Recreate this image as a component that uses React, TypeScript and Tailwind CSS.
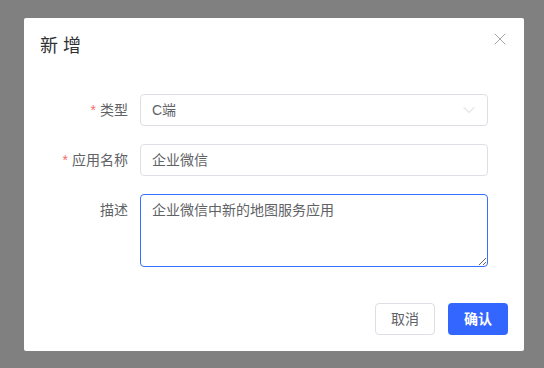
import React from 'react';
import { X, ChevronDown } from 'lucide-react';

const fontFamily = { fontFamily: '"Liberation Sans", "Noto Sans CJK SC", sans-serif' };

const Label: React.FC<{ text: string; required?: boolean }> = ({ text, required }) => (
  <div className="w-[88px] shrink-0 text-right text-[14px] leading-[32px] text-[#606266]">
    {required && <span className="mr-1 text-[#f56c6c]">*</span>}
    {text}
  </div>
);

const App: React.FC = () => {
  return (
    <div className="h-[368px] w-[544px] bg-[#808080] pl-[24px] pt-[18px]" style={fontFamily}>
      <div className="flex h-[333px] w-[500px] flex-col rounded-[2px] bg-white">
        <div className="flex items-start justify-between pl-[16px] pr-[14px] pt-[16px]">
          <h2 className="text-[18px] leading-[24px] text-[#303133]">新 增</h2>
          <button className="mt-[-5px] text-[#909399]">
            <X className="h-[20px] w-[20px]" strokeWidth={1} />
          </button>
        </div>

        <div className="mt-[36px] flex flex-col gap-[18px] pl-[16px] pr-[36px]">
          <div className="flex gap-[12px]">
            <Label text="类型" required />
            <div className="flex h-[32px] flex-1 items-center justify-between rounded-[4px] border border-[#dcdfe6] pl-[11px] pr-[8px] text-[14px] text-[#606266]">
              <span>C端</span>
              <ChevronDown className="h-[20px] w-[20px] text-[#c0c4cc]" strokeWidth={0.9} />
            </div>
          </div>

          <div className="flex gap-[12px]">
            <Label text="应用名称" required />
            <div className="flex h-[32px] flex-1 items-center rounded-[4px] border border-[#dcdfe6] px-[11px] text-[14px] text-[#606266]">
              企业微信
            </div>
          </div>

          <div className="flex gap-[12px]">
            <Label text="描述" />
            <textarea
              className="h-[73px] flex-1 resize-y rounded-[4px] border border-[#3370ff] px-[11px] py-[5px] text-[14px] leading-[21px] text-[#606266] outline-none"
              defaultValue="企业微信中新的地图服务应用"
            />
          </div>
        </div>

        <div className="mt-auto flex justify-end gap-[13px] pb-[16px] pr-[16px]">
          <button className="h-[32px] w-[60px] rounded-[4px] border border-[#dcdfe6] bg-white text-[14px] text-[#606266]">
            取消
          </button>
          <button className="h-[32px] w-[60px] rounded-[4px] bg-[#3366ff] text-[14px] font-semibold text-white">
            确认
          </button>
        </div>
      </div>
    </div>
  );
};

export default App;
